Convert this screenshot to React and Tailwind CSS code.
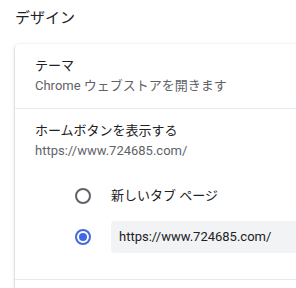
export default function App() {
  const font = { fontFamily: 'Roboto, "Noto Sans CJK JP", sans-serif' };
  return (
    <div className="w-[296px] h-[288px] overflow-hidden bg-white text-[#202124]" style={font}>
      <div className="pl-[15px] pt-[7px] h-[44px] text-[15px] leading-[22px]">デザイン</div>
      <div className="ml-[15px] w-[320px] h-[260px] bg-white rounded-[4px] shadow-[0_1px_3px_rgba(60,64,67,0.3),0_1px_2px_rgba(60,64,67,0.15)]">
        <div className="h-[64px] px-[20px] flex flex-col justify-center">
          <div className="text-[13px] leading-[20px]">テーマ</div>
          <div className="text-[13px] leading-[20px] text-[#5f6368]">Chrome ウェブストアを開きます</div>
        </div>
        <div className="h-px bg-[#e8eaed]" />
        <div className="px-[20px] pt-[12px]">
          <div className="text-[13px] leading-[20px]">ホームボタンを表示する</div>
          <div className="text-[13px] leading-[20px] text-[#5f6368]">https://www.724685.com/</div>
        </div>
        <div className="pl-[60px] pt-[15px] flex flex-col">
          <div className="flex items-center h-[40px]">
            <div className="w-[16px] h-[16px] rounded-full border-2 border-[#5f6368]" />
            <div className="ml-[20px] text-[13px]">新しいタブ ページ</div>
          </div>
          <div className="flex items-center h-[42px]">
            <div className="w-[16px] h-[16px] rounded-full border-2 border-[#4169e1] flex items-center justify-center">
              <div className="w-[8px] h-[8px] rounded-full bg-[#4169e1]" />
            </div>
            <div className="ml-[20px] h-[32px] flex-1 bg-[#f1f3f4] rounded-[4px] flex items-center pl-[8px] text-[13px]">https://www.724685.com/</div>
          </div>
        </div>
        <div className="mt-[21px] h-px bg-[#e8eaed]" />
      </div>
    </div>
  );
}
